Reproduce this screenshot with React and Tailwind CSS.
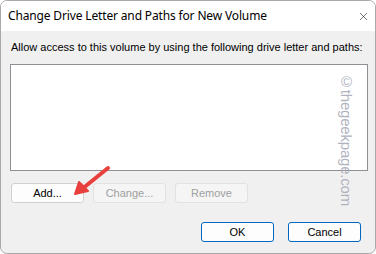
import { X } from "lucide-react";

function Btn({ label, kind = "normal", className = "" }) {
  const styles = {
    normal: "bg-[#fdfdfd] border-[#d0d0d0] text-black",
    disabled: "bg-[#f5f5f5] border-[#e2e2e2] text-[#a0a0a0]",
    primary: "bg-[#fdfdfd] border-[#0067c0] text-black",
  };
  return (
    <button
      type="button"
      className={`h-[20px] w-[73px] rounded-[3px] border text-[11px] leading-none flex items-center justify-center ${styles[kind]} ${className}`}
    >
      {label}
    </button>
  );
}

export default function App() {
  return (
    <div className="w-[376px] h-[254px] bg-white font-['Liberation_Sans',Arial,sans-serif]">
      <div className="relative h-full rounded-[7px] border border-[#a9a9a9] overflow-hidden flex flex-col bg-[#f0f0f0]">
        {/* Title bar */}
        <div className="h-[30px] bg-white flex items-center justify-between pl-[7px] pr-[5px]">
          <span className="text-[12px] text-black font-['Noto_Sans',sans-serif] tracking-[-0.15px]">
            Change Drive Letter and Paths for New Volume
          </span>
          <X size={13} strokeWidth={1.1} className="text-[#222]" />
        </div>

        {/* Body */}
        <div className="flex-1 flex flex-col px-[9px] pt-[10px]">
          <p className="pl-[1px] text-[11px] leading-[13px] text-black">
            Allow access to this volume by using the following drive letter and paths:
          </p>
          <div className="mt-[10px] h-[107px] w-[358px] bg-white border border-[#8e8e94]" />

          <div className="mt-[12px] flex gap-[9px] pl-[1px]">
            <Btn label="Add..." />
            <Btn label="Change..." kind="disabled" className="w-[72px]" />
            <Btn label="Remove" kind="disabled" className="w-[73px]" />
          </div>

          <div className="mt-[19px] flex justify-end gap-[14px] pr-[5px]">
            <Btn label="OK" kind="primary" />
            <Btn label="Cancel" kind="primary" />
          </div>
        </div>

        {/* Watermark */}
        <div className="absolute left-[338px] top-[72px] text-[15px] leading-none text-[#b0b2bf] tracking-[-0.2px] [writing-mode:vertical-rl] font-['Liberation_Sans',Arial,sans-serif]">
          ©thegeekpage.com
        </div>

        {/* Red annotation arrow */}
        <svg
          className="absolute left-[66px] top-[160px]"
          width="50"
          height="40"
          viewBox="0 0 50 40"
        >
          <line x1="41" y1="7" x2="15" y2="28" stroke="#e8403d" strokeWidth="4" strokeLinecap="round" />
          <polygon points="8,33 12,21 21,30" fill="#e8403d" stroke="#e8403d" strokeWidth="2" strokeLinejoin="round" />
        </svg>
      </div>
    </div>
  );
}
